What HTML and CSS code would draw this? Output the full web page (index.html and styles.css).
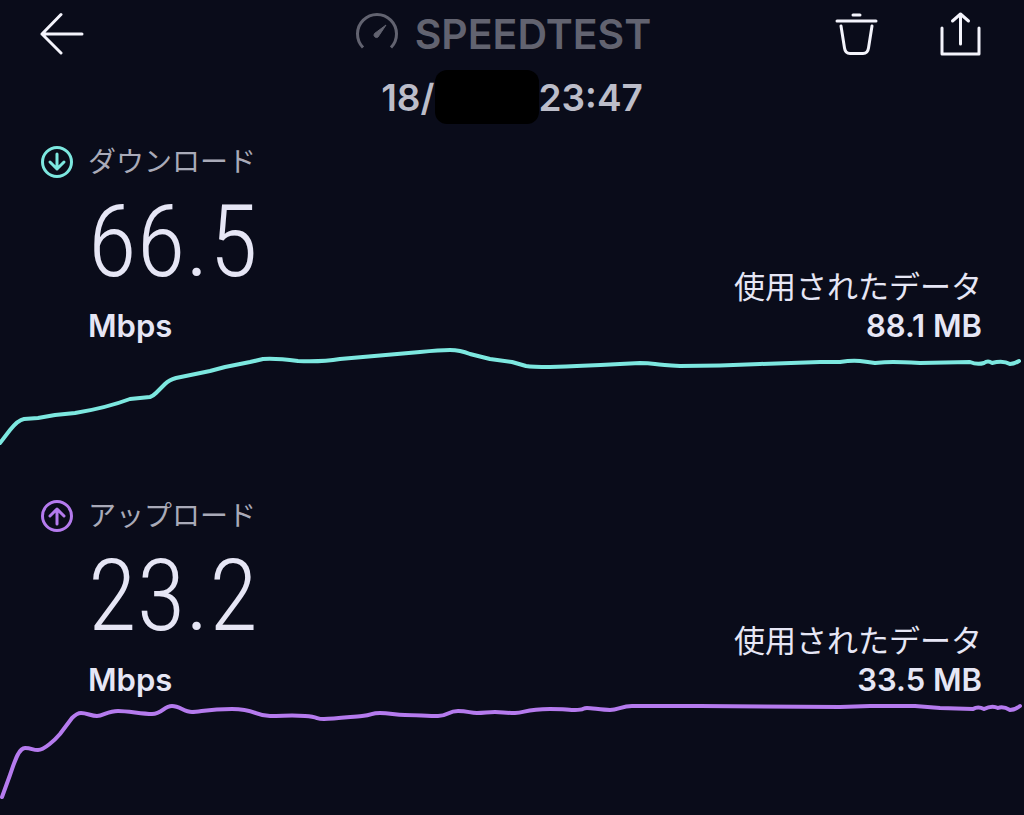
FILE: index.html
```
<!DOCTYPE html>
<html lang="ja">
<head>
    <meta charset="UTF-8">
    <meta name="viewport" content="width=device-width, initial-scale=1.0">
    <title>Speedtest</title>
    <link rel="stylesheet" href="styles.css">
</head>
<body>
    <header class="header">
        <div class="toolbar">
            <button class="icon-btn" type="button" aria-label="戻る">
                <svg width="44" height="44" viewBox="0 0 44 44">
                    <path d="M42 22H2M21 2.500L2 22l19 19"/>
                </svg>
            </button>

            <h1 class="brand">
                <svg width="44" height="44" viewBox="0 0 44 44">
                    <path d="M8 35.500a19.500 19.500 0 1 1 28 0"/>
                    <path class="needle" d="M31 13L19.500 21.500a2.500 2.500 0 0 0 3.500 3.500z"/>
                </svg>
                <span>SPEEDTEST</span>
            </h1>

            <div class="actions">
                <button class="icon-btn" type="button" aria-label="削除">
                    <svg width="44" height="44" viewBox="0 0 44 44">
                        <path d="M3 9h39M19 3h7M7 14l3.500 22q.8 5.500 5.500 5.500h13q4.700 0 5.500-5.500L38 14"/>
                    </svg>
                </button>
                <button class="icon-btn" type="button" aria-label="共有">
                    <svg width="44" height="44" viewBox="0 0 44 44">
                        <path d="M4 16v26h37V16M22.500 32V3M14.500 9l8-7 8 7"/>
                    </svg>
                </button>
            </div>
        </div>

        <p class="date">
            <span>18/</span>
            <span class="redacted"></span>
            <span>23:47</span>
        </p>
    </header>

    <main>
        <section class="result download">
            <div class="result-info">
                <h2 class="result-title">
                    <svg width="34" height="34" viewBox="0 0 34 34">
                        <circle cx="17" cy="17" r="14.500"/>
                        <path d="M17 9v15M10 17l7 7 7-7"/>
                    </svg>
                    <span>ダウンロード</span>
                </h2>
                <div class="result-row">
                    <div class="speed">
                        <div class="speed-value">66.5</div>
                        <div class="text">Mbps</div>
                    </div>
                    <div class="data">
                        <div class="data-label">使用されたデータ</div>
                        <div class="text">88.1 MB</div>
                    </div>
                </div>
            </div>
            <svg class="chart" viewBox="0 0 1024 116">
                <path d="M0 99L10 86Q18 76 24 75L38 74L55 71L75 69Q106 64 130 55L150 53Q153 52 156 49L165 40Q169 36 176 34L210 27L225 23L250 18L263 15Q275 14 298 17Q322 18 340 15L420 8Q440 6 450 6T470 10L490 15L512 18L526 22Q532 23 550 23Q580 22 620 20L640 19Q648 19 655 20T680 22Q720 22 760 20L820 18H840Q852 16 860 17T875 19Q885 18 893 18T920 19L970 18Q977 21 984 19Q988 16 992 19Q1003 16 1010 20Q1014 20 1019 17"/>
            </svg>
        </section>

        <section class="result upload">
            <div class="result-info">
                <h2 class="result-title">
                    <svg width="34" height="34" viewBox="0 0 34 34">
                        <circle cx="17" cy="17" r="14.500"/>
                        <path d="M17 25V10M10 17l7-7 7 7"/>
                    </svg>
                    <span>アップロード</span>
                </h2>
                <div class="result-row">
                    <div class="speed">
                        <div class="speed-value">23.2</div>
                        <div class="text">Mbps</div>
                    </div>
                    <div class="data">
                        <div class="data-label">使用されたデータ</div>
                        <div class="text">33.5 MB</div>
                    </div>
                </div>
            </div>
            <svg class="chart" viewBox="0 0 1024 116">
                <path d="M2 99L10 77C14 66 18 50 25 50S32 52 38 52S55 42 60 36L72 20Q77 15 81 15C87 15 91 18 97 18S108 13 118 13S142 16 152 16S164 8 172 8S184 14 192 14S208 11 232 11S255 18 270 18S290 17 305 18S315 21 324 21S350 19 362 18S370 15 380 15S395 17 405 17S428 18 438 18S448 13 458 13S470 15 477 15S488 14 495 14S505 15 515 15S525 11 550 11S565 12 575 12S582 10 587 10S602 12 610 12S622 8 632 8L700 8L840 9L870 8L915 8L940 10L973 11Q978 8 984 11Q992 7 998 10Q1003 8 1010 12Q1015 12 1020 8"/>
            </svg>
        </section>
    </main>
</body>
</html>
```
FILE: styles.css
```
* {
    margin: 0;
    padding: 0;
    box-sizing: border-box;
}

body {
    background: #0a0c1a;
    color: #e6e6f5;
    font-family: 'Inter', 'Noto Sans CJK JP', sans-serif;
}

svg {
    display: block;
    fill: none;
    stroke: currentColor;
    stroke-width: 3;
    stroke-linecap: round;
    stroke-linejoin: round;
}

.toolbar {
    display: grid;
    grid-template-columns: 1fr auto 1fr;
    align-items: center;
    height: 68px;
    padding: 0 42px 0 40px;
}

.icon-btn {
    width: 44px;
    height: 44px;
    background: none;
    border: none;
    color: #f4f4fc;
    cursor: pointer;
}

.brand {
    display: flex;
    align-items: center;
    gap: 16px;
    margin-right: 16px;
    color: #626370;
    font-size: 41px;
    font-weight: 600;
}

.brand svg {
    stroke-width: 3;
    stroke-linecap: butt;
}

.brand .needle {
    fill: currentColor;
    stroke-width: 1;
}

.actions {
    display: flex;
    justify-content: flex-end;
    gap: 60px;
}

.date {
    display: flex;
    justify-content: center;
    align-items: center;
    height: 58px;
    color: #bcbdc9;
    font-size: 37px;
    font-weight: 600;
}

.redacted {
    width: 104px;
    height: 54px;
    background: #000000;
    border-radius: 12px;
}

.result {
    padding-top: 16px;
    margin-bottom: 20px;
}

.result:last-child {
    margin-bottom: 0;
}

.result-info {
    padding: 0 42px 0 40px;
}

.result-title {
    display: flex;
    align-items: center;
    gap: 14px;
    height: 40px;
    color: #a9aab8;
    font-size: 28px;
    font-weight: 400;
    line-height: 42px;
}

.download svg {
    color: #7de8e0;
}

.upload svg {
    color: #b57bee;
}

.result-row {
    display: flex;
    justify-content: space-between;
    align-items: flex-end;
    padding-left: 48px;
}

.speed-value {
    margin: 8px 0 14px;
    font-family: 'Roboto Condensed', 'Liberation Sans Narrow', 'Roboto', sans-serif;
    font-size: 100px;
    font-weight: 300;
    line-height: 104px;
}

.data {
    text-align: right;
}

.data-label {
    font-size: 31px;
    font-weight: 400;
    line-height: 42px;
}

.text {
    font-size: 31px;
    font-weight: 600;
    line-height: 36px;
}

.chart {
    width: 100%;
    height: auto;
    stroke-width: 4;
}
```
